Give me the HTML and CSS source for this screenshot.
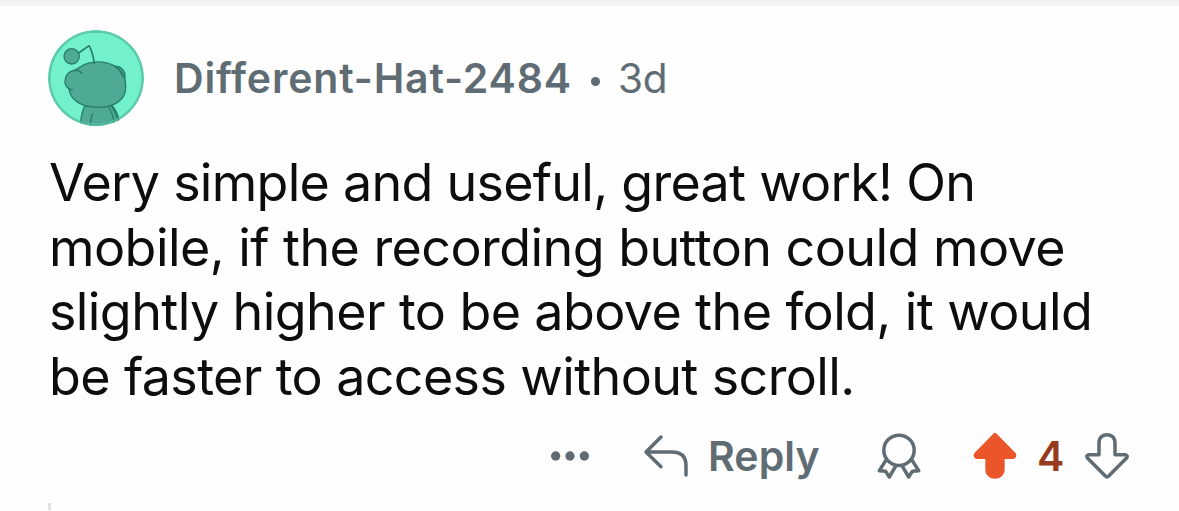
FILE: index.html
```
<!DOCTYPE html>
<html lang="en">
<head>
<meta charset="utf-8">
<title>Comment</title>
<link rel="stylesheet" href="styles.css">
</head>
<body>
<article class="comment">
  <header class="head">
    <svg class="avatar" viewBox="24 30 288 288">
      <defs><clipPath id="disc"><circle cx="168" cy="174" r="144"/></clipPath></defs>
      <g clip-path="url(#disc)">
        <circle cx="168" cy="174" r="144" fill="#73f1cd"/>
        <g fill="#4eaa94" stroke="#277d69" stroke-width="4" stroke-linejoin="round" stroke-linecap="round">
          <path d="M121 320C122 292 126 270 137 252H213C229 270 236 286 240 320Z"/>
          <path d="M152 320C151 304 153 292 158 281M204 258C216 276 222 292 224 320M212 255C225 272 231 290 235 306" fill="none"/>
          <path d="M225 139C242 137 257 153 255 172C254 180 250 185 246 187Z"/>
          <path d="M126 137C150 125 190 122 220 137C247 151 258 176 257 205C256 242 219 263 171 262C126 261 91 242 87 207C75 199 73 184 78 170C85 153 104 146 126 137Z" stroke="none"/>
          <path d="M108 152C135 122 188 119 222 137C247 151 258 176 257 205C256 242 219 263 171 262C126 261 91 242 87 207C75 199 73 184 78 170C86 150 114 144 127 161" fill="none"/>
          <path d="M87 206C90 209 94 210 98 209M225 139C236 145 244 157 248 170" fill="none"/>
          <path d="M116 99L147 77C156 92 160 109 163 130" fill="none" stroke-width="5"/>
          <circle cx="95" cy="109" r="23"/>
        </g>
        <circle cx="168" cy="174" r="140" fill="none" stroke="#55bd9f" stroke-opacity=".75" stroke-width="8"/>
      </g>
    </svg>
    <span class="name">Different-Hat-2484</span>
    <span class="dot"></span>
    <span class="age">3d</span>
  </header>
  <p class="body">
    <span class="line l1">Very simple and useful, great work! On</span>
    <span class="line l2">mobile, if the recording button could move</span>
    <span class="line l3">slightly higher to be above the fold, it would</span>
    <span class="line l4">be faster to access without scroll.</span>
  </p>
  <footer class="actions">
    <svg class="more" viewBox="45 90 120 36"><g fill="#5f6c74"><circle cx="62" cy="108" r="14"/><circle cx="105" cy="108" r="14"/><circle cx="148" cy="108" r="14"/></g></svg>
    <svg class="reply-icon" viewBox="324 45 141 132"><path d="M378 54L333 99L378 143M334 99H411C439 99 453 113 453 140V168" class="stroke"/></svg>
    <span class="reply">Reply</span>
    <svg class="award" viewBox="51 39 132 138"><g class="stroke"><circle cx="117" cy="91" r="45.5"/><path d="M79 119L58 152L77 154L88 171L108 137M155 119L176 152L157 154L146 171L126 137"/></g></svg>
    <svg class="up" viewBox="339 33 132 144"><path fill="#eb552a" d="M400 38Q405 33 410 38L466 95C472 102 468 114 458 114H434V145C434 183 376 183 376 145V114H352C342 114 338 102 344 95Z"/></svg>
    <span class="score">4</span>
    <svg class="down" viewBox="675 39 132 144"><path class="stroke" d="M717 107V71C717 39 765 39 765 71V107H794C801 107 804 112 799 118L746 171Q741 177 736 171L683 118C678 112 681 107 688 107Z"/></svg>
  </footer>
</article>
</body>
</html>
```

FILE: styles.css
```
body {
  margin: 0;
  background: #fefefe;
  font-family: Inter, "Liberation Sans", sans-serif;
  color: #5f6c74;
}
.comment {
  box-sizing: border-box;
  height: 511px;
  overflow: hidden;
  border-top: 6px solid #f1f2f4;
  padding: 24px 48px 0;
  display: flex;
  flex-direction: column;
}
.head {
  display: flex;
  align-items: center;
  height: 96px;
}
.avatar { width: 96px; height: 96px; margin-right: 30px; }
.name { font-size: 41px; font-weight: 600; letter-spacing: .83px; white-space: nowrap; width: 396px; }
.dot { width: 9px; height: 9px; border-radius: 50%; background: #5f6c74; margin: 6px 18px 0 21px; }
.age { font-size: 40.5px; letter-spacing: -.3px; }
.body {
  margin: 25px 0 0 1px;
  color: #0c0d0e;
  font-size: 52px;
  line-height: 64.5px;
}
.line { display: block; white-space: nowrap; }
.l1 { letter-spacing: -.73px; }
.l2 { letter-spacing: -.56px; }
.l3 { letter-spacing: -.6px; }
.l4 { letter-spacing: -.62px; }
.actions {
  display: flex;
  align-items: center;
  height: 50px;
  margin: 22px 0 0 502px;
}
.actions svg { flex: none; }
.stroke { fill: none; stroke: #5f6c74; stroke-width: 10.5; stroke-linecap: round; stroke-linejoin: round; }
.more { width: 40px; height: 12px; }
.reply-icon { width: 47px; height: 44px; margin-left: 53px; }
.reply { font-size: 41px; font-weight: 600; letter-spacing: .1px; margin-left: 18px; width: 114px; }
.award { width: 44px; height: 46px; margin-left: 55px; }
.up { width: 44px; height: 48px; margin-left: 52px; }
.score { font-size: 41px; font-weight: 600; color: #963b20; margin-left: 20px; width: 27px; }
.down { width: 44px; height: 48px; margin-left: 21px; }
.comment::after {
  content: "";
  width: 3px;
  height: 7px;
  margin-top: 22px;
  background: #e0e1e2;
}
```
